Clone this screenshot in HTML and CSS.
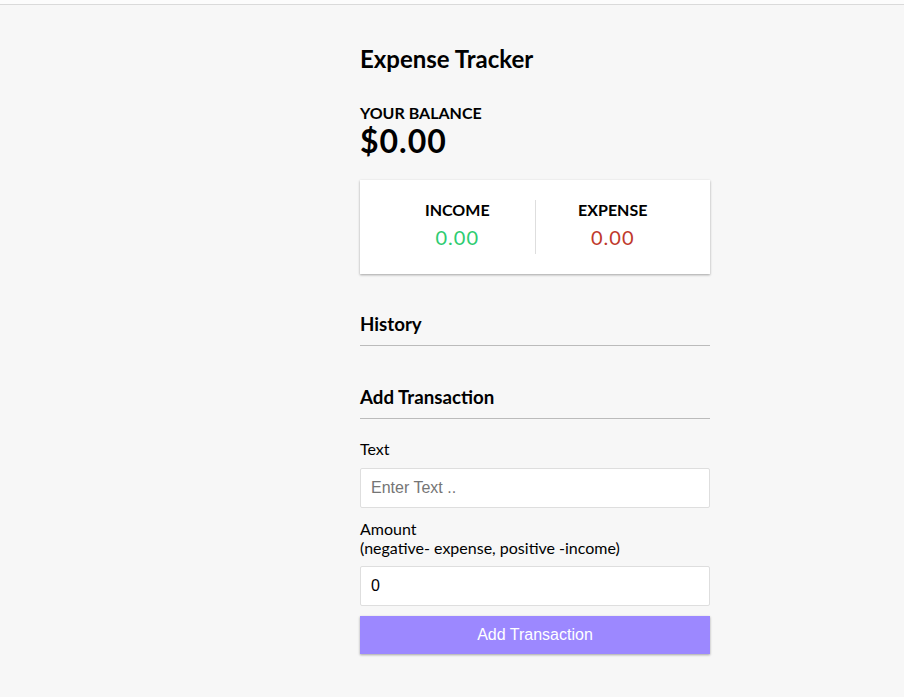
FILE: index.html
```html
<!DOCTYPE html>
<html lang="en">
<head>
<meta charset="UTF-8">
<title>Expense Tracker</title>
<link rel="stylesheet" href="styles.css">
</head>
<body>
<div class="topline"></div>
<div class="container">
  <h2 class="title">Expense Tracker</h2>
  <h4>Your Balance</h4>
  <h1 class="balance">$0.00</h1>
  <div class="inc-exp-container">
    <div class="inc">
      <h4>Income</h4>
      <p class="money plus">0.00</p>
    </div>
    <div class="exp">
      <h4>Expense</h4>
      <p class="money minus">0.00</p>
    </div>
  </div>
  <h3 class="history">History</h3>
  <ul class="list"></ul>
  <h3>Add Transaction</h3>
  <form class="form">
    <div class="form-control">
      <label for="text">Text</label>
      <input type="text" id="text" placeholder="Enter Text ..">
    </div>
    <div class="form-control">
      <label for="amount" class="amount-label">Amount<br>(negative- expense, positive -income)</label>
      <input type="number" id="amount" value="0">
    </div>
    <button type="button" class="btn">Add Transaction</button>
  </form>
</div>
</body>
</html>
```
FILE: styles.css
```css
* { box-sizing: border-box; }
body {
  margin: 0;
  background-color: #f7f7f7;
  font-family: Lato, "Noto Sans", sans-serif;
  color: #000;
}
.topline {
  height: 5px;
  background: #fcfcfc;
  border-bottom: 1px solid #dadada;
}
.container {
  width: 350px;
  margin: 40px 0 30px 360px;
}
.title {
  font-size: 24px;
  margin: 0 0 29px;
  line-height: 1.2;
}
h4 {
  margin: 0;
  font-size: 16px;
  line-height: 1.2;
  text-transform: uppercase;
}
.balance {
  margin: 0;
  font-size: 32px;
  line-height: 1.2;
  letter-spacing: 1px;
}
.inc-exp-container {
  background-color: #fff;
  box-shadow: 0 1px 3px rgba(0,0,0,0.12), 0 1px 2px rgba(0,0,0,0.24);
  padding: 20px;
  display: flex;
  justify-content: space-between;
  margin: 20px 0;
}
.inc-exp-container > div {
  flex: 1;
  text-align: center;
}
.inc-exp-container > .inc {
  border-right: 1px solid #dedede;
}
.money {
  font-size: 20px;
  line-height: 1.2;
  letter-spacing: 1px;
  margin: 5px 0;
}
.plus { color: #2ecc71; }
.minus { color: #c0392b; }
h3 {
  font-size: 18.72px;
  line-height: 1.2;
  border-bottom: 1px solid #bbb;
  padding-bottom: 10px;
  margin: 40px 0 10px;
}
h3.history { margin-top: 39px; }
.list {
  list-style: none;
  padding: 0;
  margin: 16px 0 40px;
}
.form { margin: 0; }
label {
  display: inline-block;
  margin: 10px 0 9px;
  font-size: 16px;
  line-height: 1.2;
}
label.amount-label { margin: 11px 0 9px; }
input {
  display: block;
  width: 100%;
  border: 1px solid #dedede;
  border-radius: 2px;
  font-size: 16px;
  padding: 10px;
  font-family: "Liberation Sans", Arial, sans-serif;
  background: #fff;
  color: #000;
}
input::placeholder { color: #757575; }
.btn {
  display: block;
  width: 100%;
  background-color: #9c88ff;
  box-shadow: 0 1px 3px rgba(0,0,0,0.12), 0 1px 2px rgba(0,0,0,0.24);
  color: #fff;
  border: 0;
  font-size: 16px;
  font-family: "Liberation Sans", Arial, sans-serif;
  margin: 10px 0 30px;
  padding: 10px;
}
```
